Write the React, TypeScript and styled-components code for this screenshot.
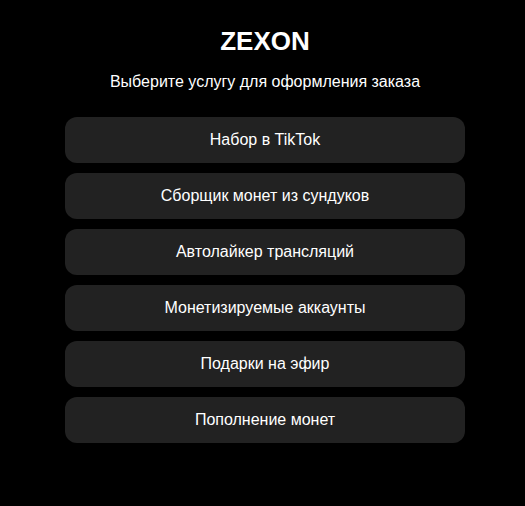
import React from "react";
import styled, { createGlobalStyle } from "styled-components";

const Global = createGlobalStyle`
  html, body { margin: 0; padding: 0; background: #000; }
  body { font-family: "Liberation Sans", Arial, sans-serif; color: #fff; }
`;

const Page = styled.div`
  display: flex;
  flex-direction: column;
  align-items: center;
  padding: 25px 0 0 5px;
`;

const Title = styled.h1`
  margin: 0;
  font-size: 26px;
  line-height: 32px;
  font-weight: 700;
`;

const Subtitle = styled.p`
  margin: 15px 0 0;
  font-size: 16px;
  line-height: 20px;
`;

const List = styled.div`
  margin-top: 25px;
  width: 400px;
  display: flex;
  flex-direction: column;
  gap: 10px;
`;

const Item = styled.button`
  height: 46px;
  border: none;
  border-radius: 12px;
  background: #222;
  color: #fff;
  font-family: "Liberation Sans", Arial, sans-serif;
  font-size: 16px;
  cursor: pointer;
  padding: 0;
`;

const items = [
  "Набор в TikTok",
  "Сборщик монет из сундуков",
  "Автолайкер трансляций",
  "Монетизируемые аккаунты",
  "Подарки на эфир",
  "Пополнение монет",
];

export default function App() {
  return (
    <>
      <Global />
      <Page>
        <Title>ZEXON</Title>
        <Subtitle>Выберите услугу для оформления заказа</Subtitle>
        <List>
          {items.map((t) => (
            <Item key={t}>{t}</Item>
          ))}
        </List>
      </Page>
    </>
  );
}
